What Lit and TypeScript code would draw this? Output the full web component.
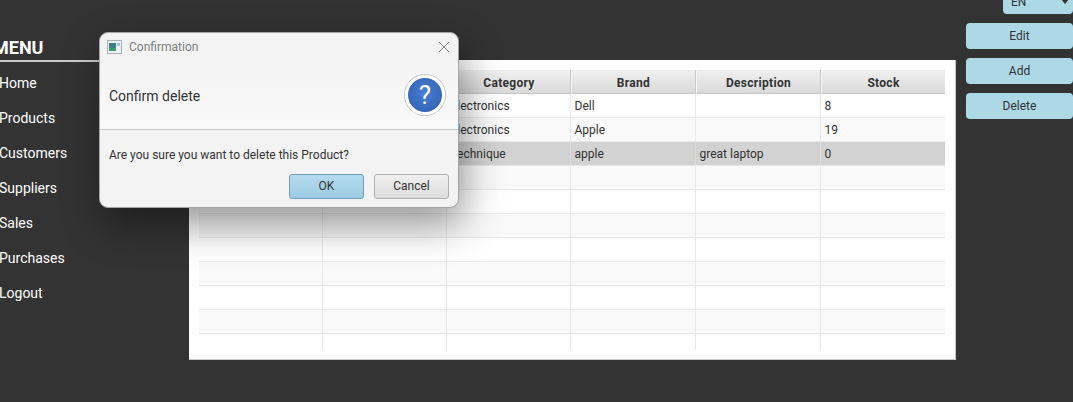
import { LitElement, html, css } from 'lit';
import { customElement } from 'lit/decorators.js';

const menu = ['Home', 'Products', 'Customers', 'Suppliers', 'Sales', 'Purchases', 'Logout'];
const columns = ['', '', 'Category', 'Brand', 'Description', 'Stock'];
const rows = [
    ['', '', 'Electronics', 'Dell', '', '8'],
    ['', '', 'Electronics', 'Apple', '', '19'],
    ['', '', 'Technique', 'apple', 'great laptop', '0'],
    ...Array.from({ length: 8 }, () => ['', '', '', '', '', '']),
];
const selectedRow = 2;

@customElement('app-root')
export class AppRoot extends LitElement {
    static styles = css`
    :host {
        display: block;
        height: 402px;
        overflow: hidden;
        background: #333333;
        font-family: Roboto, "Noto Sans", sans-serif;
        font-size: 12px;
        color: #333333;
    }
    .page {
        position: relative;
        display: flex;
        height: 402px;
    }
    .sidebar {
        width: 189px;
        flex: none;
        padding-top: 36px;
        box-sizing: border-box;
    }
    .menu-title {
        height: 24px;
        line-height: 23px;
        margin-left: -7px;
        font-size: 18px;
        font-weight: 700;
        color: #ffffff;
        border-bottom: 2px solid #cccccc;
        width: 130px;
    }
    .menu-item {
        height: 35px;
        line-height: 35px;
        margin-left: -1px;
        font-size: 14px;
        color: #ffffff;
    }
    .menu-list {
        margin-top: 4px;
    }
    .panel {
        width: 767px;
        height: 300px;
        flex: none;
        margin-top: 60px;
        padding: 10px;
        box-sizing: border-box;
        background: #ffffff;
        border-right: 1px solid #c8c8c8;
        border-bottom: 1px solid #c8c8c8;
    }
    .table {
        height: 280px;
        overflow: hidden;
    }
    .row {
        display: grid;
        grid-template-columns: 124px 124px 124px 125px 125px 125px;
        height: 24px;
        box-sizing: border-box;
        border-bottom: 1px solid #e9e9e9;
        background: #ffffff;
    }
    .row.odd {
        background: #f9f9f9;
    }
    .row.selected {
        background: #d2d2d2;
    }
    .cell {
        height: 23px;
        box-sizing: border-box;
        padding: 1px 0 0 3.5px;
        line-height: 22px;
        border-right: 1px solid #e9e9e9;
        white-space: nowrap;
        overflow: hidden;
    }
    .row.selected .cell {
        border-right-color: #dcdcdc;
    }
    .head {
        display: grid;
        grid-template-columns: 124px 124px 124px 125px 125px 125px;
        height: 24px;
    }
    .head-cell {
        height: 24px;
        box-sizing: border-box;
        padding-top: 1px;
        text-align: center;
        line-height: 24px;
        font-weight: 700;
        letter-spacing: 0.3px;
        background: linear-gradient(#f0f0f0, #d9d9d9);
        border-bottom: 1px solid #c8c8c8;
        border-right: 1px solid #c8c8c8;
        border-left: 1px solid #f6f6f6;
    }
    .actions {
        width: 107px;
        flex: none;
        margin-left: 10px;
    }
    .lang {
        display: flex;
        justify-content: space-between;
        align-items: center;
        margin-left: 37px;
        margin-top: -11px;
        height: 25px;
        padding: 0 4px 0 8px;
        box-sizing: border-box;
        border-radius: 4px;
        background: #add8e6;
    }
    .lang svg {
        display: block;
    }
    .btn {
        display: block;
        height: 26px;
        line-height: 26px;
        margin-top: 9px;
        text-align: center;
        border-radius: 4px;
        background: #add8e6;
    }
    .dialog {
        position: absolute;
        left: 99px;
        top: 32px;
        width: 360px;
        height: 176px;
        box-sizing: border-box;
        display: flex;
        flex-direction: column;
        border: 1px solid #a4a4a4;
        border-radius: 9px;
        background: #f3f3f3;
        box-shadow: 4px 16px 40px rgba(0, 0, 0, 0.42);
    }
    .titlebar {
        display: flex;
        align-items: center;
        gap: 7px;
        height: 28px;
        padding: 0 8px 0 7px;
        color: #7f7f7f;
    }
    .titlebar .name {
        flex: 1;
    }
    .titlebar svg {
        display: block;
    }
    .header {
        display: flex;
        align-items: center;
        justify-content: space-between;
        height: 69px;
        padding: 0 13px 0 9px;
        box-sizing: border-box;
        font-size: 14px;
        background: linear-gradient(#f3f3f3, #f9f9f9);
        border-bottom: 1px solid #c8c8c8;
    }
    .header span {
        margin-top: 2px;
    }
    .question {
        width: 34px;
        height: 34px;
        border-radius: 50%;
        border: 3px solid #ffffff;
        box-shadow: 0 0 0 1px #c4c4c4;
        background: radial-gradient(circle at 50% 45%, #4a7ed2, #2c5cb0);
        color: #ffffff;
        font-size: 26px;
        line-height: 34px;
        text-align: center;
    }
    .message {
        padding: 16px 9px 0;
        line-height: 18px;
    }
    .buttons {
        display: flex;
        justify-content: flex-end;
        gap: 10px;
        padding: 10px 9px 0;
    }
    .dlg-btn {
        width: 75px;
        height: 25px;
        box-sizing: border-box;
        line-height: 23px;
        text-align: center;
        border: 1px solid #b0b0b0;
        border-radius: 3px;
        background: linear-gradient(#f0f0f0, #dcdcdc);
    }
    .dlg-btn.primary {
        border-color: #6f9fb8;
        background: linear-gradient(#b5dbee, #9ccbe2);
    }
    `;

    render() {
        return html`
        <div class="page">
            <nav class="sidebar">
                <div class="menu-title">MENU</div>
                <div class="menu-list">
                    ${menu.map((m) => html`<div class="menu-item">${m}</div>`)}
                </div>
            </nav>
            <section class="panel">
                <div class="table">
                    <div class="head">
                        ${columns.map((c) => html`<div class="head-cell">${c}</div>`)}
                    </div>
                    ${rows.map((r, i) => html`
                    <div class="row ${i % 2 ? 'odd' : ''} ${i === selectedRow ? 'selected' : ''}">
                        ${r.map((c) => html`<div class="cell">${c}</div>`)}
                    </div>`)}
                </div>
            </section>
            <aside class="actions">
                <div class="lang">
                    <span>EN</span>
                    <svg width="8" height="5" viewBox="0 0 8 5"><path d="M0 0h8L4 5z" fill="#333"/></svg>
                </div>
                <div class="btn">Edit</div>
                <div class="btn">Add</div>
                <div class="btn">Delete</div>
            </aside>
            <div class="dialog">
                <div class="titlebar">
                    <svg width="15" height="14" viewBox="0 0 15 14">
                        <rect x="0.5" y="0.5" width="14" height="13" fill="#eef1f4" stroke="#a9b0b6"/>
                        <rect x="2" y="3" width="7" height="8" fill="#3d7f86"/>
                        <rect x="2" y="8" width="7" height="3" fill="#3f9a6a"/>
                        <rect x="10" y="3" width="3" height="3" fill="#9cc4de"/>
                    </svg>
                    <span class="name">Confirmation</span>
                    <svg width="12" height="12" viewBox="0 0 12 12"><path d="M1 1l10 10M11 1L1 11" stroke="#8a8a8a" stroke-width="1" fill="none"/></svg>
                </div>
                <div class="header">
                    <span>Confirm delete</span>
                    <div class="question">?</div>
                </div>
                <div class="message">Are you sure you want to delete this Product?</div>
                <div class="buttons">
                    <div class="dlg-btn primary">OK</div>
                    <div class="dlg-btn">Cancel</div>
                </div>
            </div>
        </div>
        `;
    }
}
